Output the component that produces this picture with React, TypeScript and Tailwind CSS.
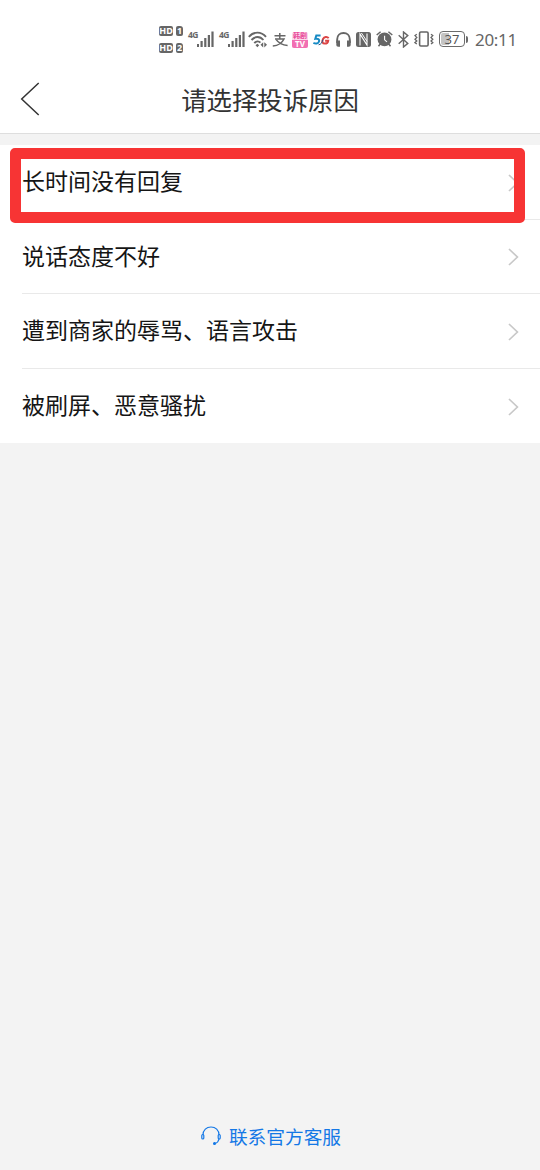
const reasons = [
  "长时间没有回复",
  "说话态度不好",
  "遭到商家的辱骂、语言攻击",
  "被刷屏、恶意骚扰",
];

function HdBadge({ sim }: { sim: string }) {
  return (
    <div className="flex gap-[3px] h-[10px] text-[9px] leading-[10px] font-bold text-white">
      <span className="w-[14px] rounded-[2px] bg-[#666] text-center">HD</span>
      <span className="w-[7px] rounded-[2px] rounded-tr-[3px] bg-[#666] text-center">{sim}</span>
    </div>
  );
}

function Signal() {
  return (
    <div className="flex w-[26px] h-4">
      <span className="w-[9px] -mt-px text-[8.5px] leading-[9px] font-bold tracking-[-0.5px]">4G</span>
      <svg className="w-[17px] h-4 shrink-0" viewBox="0 0 17 16" fill="currentColor">
        <rect x="0" y="13" width="2" height="3" />
        <rect x="3.5" y="10" width="2.2" height="6" />
        <rect x="7.2" y="7" width="2.2" height="9" />
        <rect x="10.8" y="4" width="2.2" height="12" />
        <rect x="14.4" y="0.5" width="2.2" height="15.5" />
      </svg>
    </div>
  );
}

function Wifi() {
  return (
    <svg className="w-[19px] h-[17px] ml-[3px]" viewBox="0 0 19 17" fill="none" stroke="currentColor" strokeWidth="1.9">
      <path d="M0.8 5.8C5.6 .2 13.2 .2 18 5.8" />
      <path d="M3.5 9C7 5 12 5 15.4 9" />
      <path d="M6.3 12.2C8.2 9.8 10.8 9.8 12.4 11.7" />
      <path d="M7.5 14.2L9.4 12.7L11.2 14.2L9.4 16.2Z" fill="currentColor" stroke="none" />
      <path d="M15.2 11.2V16.4L12.5 13.8ZM16.3 11.2V16.4L19 13.8Z" fill="currentColor" stroke="none" />
    </svg>
  );
}

function Alipay() {
  return (
    <svg className="w-4 h-[14px] ml-[5px] mt-px" viewBox="0 0 16 14" fill="none" stroke="currentColor" strokeWidth="1.5">
      <path d="M2.5 2.8H13.5M7.8 0V5.8M3 6H12C10 10.2 6 12.6 .8 13" />
      <path d="M4.2 6.6C6.4 9.8 11 12 15.6 12.4" />
    </svg>
  );
}

function TvApp() {
  return (
    <div className="w-4 h-4 mt-px ml-1 flex flex-col rounded-[2px] overflow-hidden bg-[#fbd9ea] text-center font-bold">
      <span className="h-2 text-[7px] leading-[8px] text-[#e94b9b]">韩剧</span>
      <span className="h-2 bg-[#f26fb2] text-[8px] leading-[8px] text-white">TV</span>
    </div>
  );
}

function FiveG() {
  return (
    <svg className="w-[17px] h-3 ml-[5px] mt-px" viewBox="0 0 17 12" fill="none" strokeWidth="2">
      <path d="M7.6 1.4H3.3L2.3 4.8C5 4.3 6.6 5.2 6 7.4C5.3 9.8 2.4 10 .4 8.8" stroke="#168ac4" />
      <path d="M15.7 4.2C14 2.3 11.2 2.8 10 5C8.7 7.6 9.5 9.6 11.8 9.6C14 9.6 15 8.6 15.2 6.8H12.1" stroke="#dc4545" />
      <path d="M5.6 10.8C8 10.4 9.2 8.7 9.8 5.6" stroke="#245789" strokeWidth="1" />
    </svg>
  );
}

function Headphones() {
  return (
    <svg className="w-[15px] h-[15px] ml-[6px]" viewBox="0 0 15 15" fill="none" stroke="currentColor" strokeWidth="1.9">
      <path d="M1.2 11V7.2C1.2 3.3 4 1 7.5 1S13.8 3.3 13.8 7.2V11" />
      <path d="M.3 8.5H4V14.7H2.3C1 14.7 .3 13.8 .3 12.7ZM14.7 8.5H11V14.7H12.7C14 14.7 14.7 13.8 14.7 12.7Z" fill="currentColor" stroke="none" />
    </svg>
  );
}

function Nfc() {
  return (
    <svg className="w-[15px] h-[15px] ml-[5px]" viewBox="0 0 15 15" fill="none">
      <rect width="15" height="15" rx="2.5" fill="currentColor" />
      <path d="M4 13.5V2L11 13V1.5" stroke="white" strokeWidth="1.1" />
      <path d="M5.4 1L11 9.4" stroke="white" strokeWidth="1" />
    </svg>
  );
}

function Alarm() {
  return (
    <svg className="w-[17px] h-4 ml-[5px]" viewBox="0 0 17 16" fill="none" stroke="currentColor" strokeWidth="1.5">
      <circle cx="8.5" cy="8.4" r="6.9" fill="currentColor" stroke="none" />
      <path d="M.7 4L4.6 .7M16.3 4L12.4 .7M4.2 13L2.5 15.2M12.8 13L14.5 15.2" />
      <path d="M8.6 4.8V8.8L11 10.8" stroke="white" strokeWidth="1.1" />
    </svg>
  );
}

function Bluetooth() {
  return (
    <svg className="w-[11px] h-[17px] ml-[5px]" viewBox="0 0 11 17" fill="none" stroke="currentColor" strokeWidth="1.4">
      <path d="M.7 4.3L9.8 12.4L5.5 16V1L9.8 4.6L.7 12.7" />
    </svg>
  );
}

function Vibrate() {
  return (
    <svg className="w-5 h-4 ml-[5px]" viewBox="0 0 20 16" fill="none" stroke="currentColor" strokeWidth="1.6">
      <rect x="5.6" y="1" width="8.5" height="14" rx="1.2" />
      <path d="M2.8 3.2L1 4.6L2.8 6.4L1 8.2L2.8 10L1 11.6L2.8 13M17 3.2L18.8 4.6L17 6.4L18.8 8.2L17 10L18.8 11.6L17 13" strokeWidth="1.3" />
    </svg>
  );
}

function Battery() {
  return (
    <div className="flex items-center ml-[5px]">
      <div className="w-[26px] h-4 rounded-[4px] border-[1.5px] border-[#6b6b6b] p-px">
        <div className="h-full rounded-[2px] bg-linear-to-r from-[#c4c4c4] from-37% to-white to-37% text-center text-[13px] leading-[12px] text-[#555]">
          37
        </div>
      </div>
      <div className="w-[2px] h-[7px] ml-px rounded-r-sm bg-[#6b6b6b]" />
    </div>
  );
}

function StatusBar() {
  return (
    <div className="flex h-[78px] pl-[159px] text-[#666] font-['Noto_Sans','Noto_Sans_CJK_SC',sans-serif]">
      <div className="flex flex-col gap-[7px] pt-[26px]">
        <HdBadge sim="1" />
        <HdBadge sim="2" />
      </div>
      <div className="flex items-center h-[78px] ml-[5px]">
        <div className="flex items-center gap-[5px]">
          <Signal />
          <Signal />
        </div>
        <Wifi />
        <Alipay />
        <TvApp />
        <FiveG />
        <Headphones />
        <Nfc />
        <Alarm />
        <Bluetooth />
        <Vibrate />
        <Battery />
        <span className="ml-[7px] mt-px text-[17px] leading-5 tracking-[-0.3px]">20:11</span>
      </div>
    </div>
  );
}

function Chevron() {
  return (
    <svg className="w-[11px] h-[18px] mt-[2px]" viewBox="0 0 11 18" fill="none" stroke="#c8c8c8" strokeWidth="1.7">
      <path d="M1 1L9.4 9L1 17" />
    </svg>
  );
}

export default function App() {
  return (
    <div className="flex flex-col w-[540px] h-[1170px] bg-[#f3f3f3] overflow-hidden font-['Noto_Sans_CJK_SC',sans-serif]">
      {/* header */}
      <div className="h-[134px] bg-white border-b border-[#dedede]">
        <StatusBar />
        <div className="grid grid-cols-[1fr_auto_1fr] items-center h-[42px] px-5">
          <svg className="w-5 h-[34px]" viewBox="0 0 20 34" fill="none" stroke="#333" strokeWidth="1.5">
            <path d="M18.7 1L1.7 17L18.7 33" />
          </svg>
          <h1 className="text-[25.4px] leading-[42px] text-[#333]">请选择投诉原因</h1>
        </div>
      </div>

      {/* complaint reasons */}
      <div className="relative mt-[11px] h-[298px] bg-white pl-[22px]">
        {reasons.map((reason, i) => (
          <div
            key={reason}
            className={`flex items-center justify-between h-[74.5px] pr-[21px] ${i < 3 ? "border-b-[1.5px] border-[#e9e9e9]" : ""}`}
          >
            <span className="pb-[3px] text-[23px] leading-[34px] text-[#151515]">{reason}</span>
            <Chevron />
          </div>
        ))}
        <div className="absolute left-[10px] top-[3px] w-[515px] h-[75px] rounded-[5px] border-[11px] border-[#f73434]" />
      </div>

      {/* customer service */}
      <div className="mt-auto flex items-center justify-center gap-2 h-[68px] pl-[2px] text-[#1478e6]">
        <svg className="w-5 h-5 -mt-px" viewBox="0 0 20 20" fill="none" stroke="currentColor" strokeWidth="1.2">
          <path d="M2 9C2 4 5.5 1 10 1S18 4 18 9" />
          <rect x=".8" y="8.5" width="2" height="4.5" rx="1" />
          <rect x="17.2" y="8.5" width="2" height="4.5" rx="1" />
          <path d="M18 13C17.5 15.5 16 17 14 17.5" />
          <circle cx="13.5" cy="17.5" r=".9" fill="currentColor" />
        </svg>
        <span className="text-[18.7px] leading-7">联系官方客服</span>
      </div>
    </div>
  );
}
